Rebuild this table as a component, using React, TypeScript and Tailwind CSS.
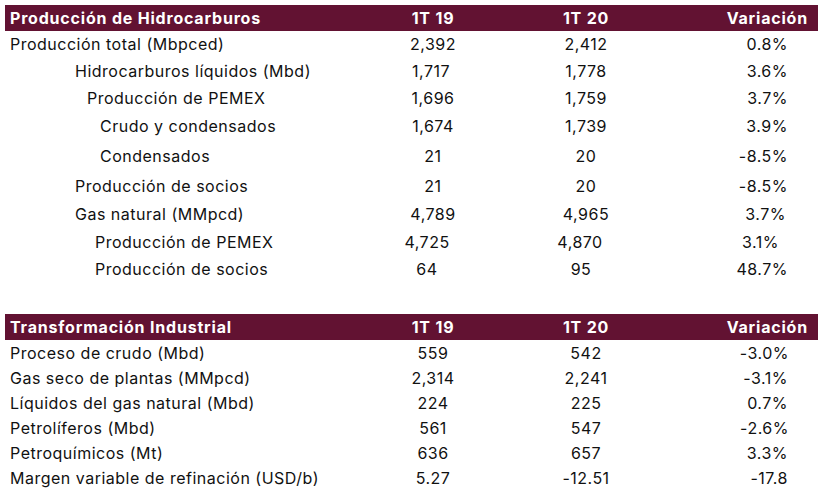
import React from "react";

type Row = {
  label: string;
  indent: string;
  h: string;
  a: string;
  b: string;
  c: string;
  aCls?: string;
  bCls?: string;
  cCls?: string;
};

const top: Row[] = [
  { label: "Producción total (Mbpced)", indent: "pl-[5px]", h: "h-[26px]", a: "2,392", b: "2,412", c: "0.8%" },
  { label: "Hidrocarburos líquidos (Mbd)", indent: "pl-[70px]", h: "h-[27px]", a: "1,717", b: "1,778", c: "3.6%", aCls: "pr-[4px]" },
  { label: "Producción de PEMEX", indent: "pl-[82px]", h: "h-[27px]", a: "1,696", b: "1,759", c: "3.7%" },
  { label: "Crudo y condensados", indent: "pl-[95px]", h: "h-[30px]", a: "1,674", b: "1,739", c: "3.9%" },
  { label: "Condensados", indent: "pl-[95px]", h: "h-[30px]", a: "21", b: "20", c: "-8.5%" },
  { label: "Producción de socios", indent: "pl-[70px]", h: "h-[29px]", a: "21", b: "20", c: "-8.5%" },
  { label: "Gas natural (MMpcd)", indent: "pl-[70px]", h: "h-[28px]", a: "4,789", b: "4,965", c: "3.7%", cCls: "pr-[32px]" },
  { label: "Producción de PEMEX", indent: "pl-[90px]", h: "h-[27px]", a: "4,725", b: "4,870", c: "3.1%", aCls: "pr-[12px]", bCls: "pr-[12px]", cCls: "pr-[39px]" },
  { label: "Producción de socios", indent: "pl-[90px]", h: "h-[28px]", a: "64", b: "95", c: "48.7%", aCls: "pr-[12px]", bCls: "pr-[10px]" },
];

const bottom: Row[] = [
  { label: "Proceso de crudo (Mbd)", indent: "pl-[5px]", h: "h-[25px]", a: "559", b: "542", c: "-3.0%", cCls: "pr-[29px]" },
  { label: "Gas seco de plantas (MMpcd)", indent: "pl-[5px]", h: "h-[25px]", a: "2,314", b: "2,241", c: "-3.1%" },
  { label: "Líquidos del gas natural (Mbd)", indent: "pl-[5px]", h: "h-[25px]", a: "224", b: "225", c: "0.7%" },
  { label: "Petrolíferos (Mbd)", indent: "pl-[5px]", h: "h-[25px]", a: "561", b: "547", c: "-2.6%", cCls: "pr-[29px]" },
  { label: "Petroquímicos (Mt)", indent: "pl-[5px]", h: "h-[25px]", a: "636", b: "657", c: "3.3%" },
  { label: "Margen variable de refinación (USD/b)", indent: "pl-[5px]", h: "h-[25px]", a: "5.27", b: "-12.51", c: "-17.8" },
];

function Header({ title }: { title: string }) {
  return (
    <div className="grid h-[26px] grid-cols-[363px_130px_176px_1fr] items-center bg-[#621232] text-[16px] font-bold leading-none tracking-[0.8px] text-white">
      <div className="pl-[5px]">{title}</div>
      <div className="text-center">1T 19</div>
      <div className="text-center">1T 20</div>
      <div className="pr-[10px] text-right">Variación</div>
    </div>
  );
}

function DataRow({ r }: { r: Row }) {
  return (
    <div className={`grid grid-cols-[363px_130px_176px_1fr] items-center text-[16px] leading-none tracking-[0.5px] text-[#111] ${r.h}`}>
      <div className={r.indent}>{r.label}</div>
      <div className={`text-center ${r.aCls ?? ""}`}>{r.a}</div>
      <div className={`text-center ${r.bCls ?? ""}`}>{r.b}</div>
      <div className={`text-right ${r.cCls ?? "pr-[30px]"}`}>{r.c}</div>
    </div>
  );
}

export default function App() {
  return (
    <div className="h-[498px] w-[818px] overflow-hidden bg-white pl-[5px] pt-[5px] font-['Inter','Noto_Sans',sans-serif]">
      <Header title="Producción de Hidrocarburos" />
      {top.map((r, i) => (
        <DataRow key={i} r={r} />
      ))}
      <div className="h-[31px]" />
      <Header title="Transformación Industrial" />
      {bottom.map((r, i) => (
        <DataRow key={i} r={r} />
      ))}
    </div>
  );
}
